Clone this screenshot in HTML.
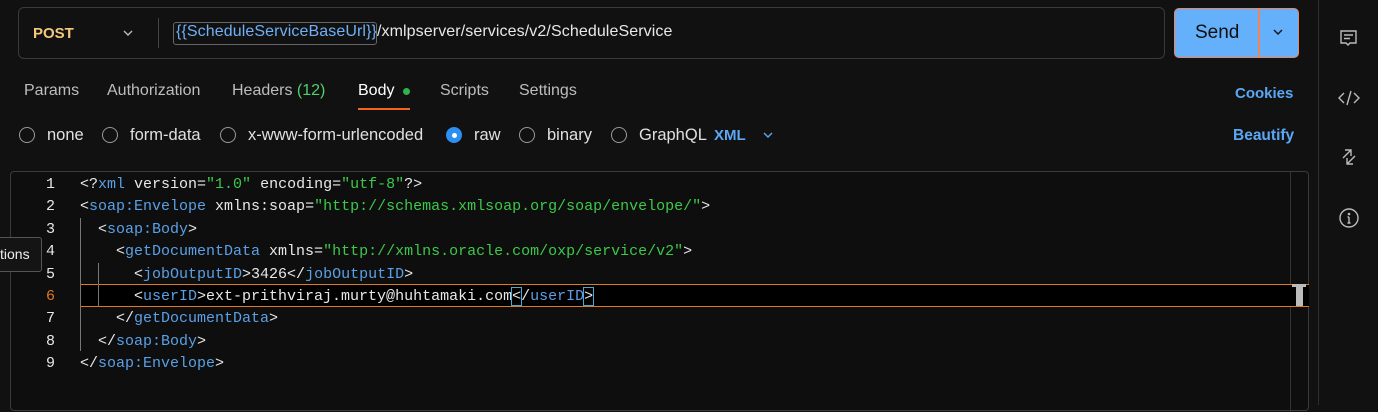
<!DOCTYPE html>
<html><head><style>
*{margin:0;padding:0;box-sizing:border-box}
body{width:1378px;height:405px;background:#111111;font-family:"Liberation Sans",sans-serif;color:#d0d0d0;position:relative;overflow:hidden}
.abs{position:absolute}
.url{left:18px;top:7px;width:1147px;height:52px;border:1px solid #3a3a3a;border-radius:6px}
.tab{top:82px;font-size:16px;color:#bdbdbd}
.radio{top:127px;width:16px;height:16px;border:1.5px solid #9a9a9a;border-radius:50%}
.rl{top:126px;font-size:16.5px;color:#e0e0e0}
.code{font-family:"Liberation Mono",monospace;font-size:15px;white-space:pre;line-height:22.4px}
.t{color:#5aa0e6}.s{color:#3cc94a}.w{color:#e8e8e8}
.ln{font-family:"Liberation Mono",monospace;font-size:15px;line-height:22.4px;text-align:right;width:20px;color:#e8e8e8}
</style></head><body>
<div class="abs url"></div>
<div class="abs" style="left:33px;top:25px;font-size:15px;font-weight:bold;color:#f5c97a">POST</div>
<svg class="abs" style="left:122px;top:28px" width="12" height="10"><path d="M2 3l4 4 4-4" stroke="#bbb" stroke-width="1.4" fill="none"/></svg>
<div class="abs" style="left:158px;top:18px;width:1px;height:30px;background:#444"></div>
<div class="abs" style="left:173px;top:22px;height:23px;width:204px;border:1px solid #666;border-radius:3px"></div>
<div class="abs" style="left:176px;top:23px;font-size:16px;color:#6fb0f7;letter-spacing:0.1px">{{ScheduleServiceBaseUrl}}<span style="color:#e8e8e8">/xmlpserver/services/v2/ScheduleService</span></div>
<div class="abs" style="left:1174px;top:8px;width:125px;height:50px;background:#64b0fb;border:1.5px solid #f0845a;border-radius:5px"></div>
<div class="abs" style="left:1258px;top:9px;width:2px;height:48px;background:#f0845a"></div>
<div class="abs" style="left:1195px;top:22px;font-size:19px;color:#101010">Send</div>
<svg class="abs" style="left:1272px;top:27px" width="12" height="10"><path d="M2 3l4 4 4-4" stroke="#111" stroke-width="1.4" fill="none"/></svg>
<div class="abs" style="left:1318px;top:0;width:1px;height:405px;background:#2e2e2e"></div>
<svg class="abs" style="left:1338px;top:28px" width="22" height="22" fill="none" stroke="#bbb" stroke-width="1.4"><path d="M3 3h15v12h-6l-2 2-2-2H3z M6 7h9 M6 10.5h6"/></svg>
<svg class="abs" style="left:1337px;top:88px" width="24" height="20" fill="none" stroke="#bbb" stroke-width="1.4"><path d="M7 5l-5 5 5 5 M17 5l5 5-5 5 M14 3l-4 14"/></svg>
<svg class="abs" style="left:1340px;top:147px" width="18" height="20" fill="none" stroke="#bbb" stroke-width="1.4"><path d="M5 3h6v6 M11 3l-8 8 M13 17H7v-6 M7 17l8-8"/></svg>
<svg class="abs" style="left:1338px;top:207px" width="22" height="22" fill="none" stroke="#bbb" stroke-width="1.4"><circle cx="11" cy="11" r="9"/><path d="M11 10v6 M9.5 10h1.5 M9.5 16h3"/><circle cx="11" cy="7" r="0.6" fill="#bbb"/></svg>
<div class="abs tab" style="left:24px">Params</div>
<div class="abs tab" style="left:107px">Authorization</div>
<div class="abs tab" style="left:232px">Headers <span style="color:#4fd06a">(12)</span></div>
<div class="abs tab" style="left:358px;color:#fff">Body</div>
<div class="abs" style="left:403px;top:88px;width:7px;height:7px;border-radius:50%;background:#2fb34e"></div>
<div class="abs" style="left:358px;top:108px;width:52px;height:2px;background:#f0641e"></div>
<div class="abs tab" style="left:440px">Scripts</div>
<div class="abs tab" style="left:519px">Settings</div>
<div class="abs" style="left:1235px;top:85px;font-size:15px;font-weight:bold;color:#5aa8f5">Cookies</div>
<div class="abs radio" style="left:19px"></div><div class="abs rl" style="left:47px">none</div>
<div class="abs radio" style="left:102px"></div><div class="abs rl" style="left:130px">form-data</div>
<div class="abs radio" style="left:220px"></div><div class="abs rl" style="left:248px">x-www-form-urlencoded</div>
<div class="abs radio" style="left:446px;background:#2d8ff0;border-color:#2d8ff0"></div><div class="abs" style="left:452px;top:133px;width:5px;height:5px;border-radius:50%;background:#fff"></div><div class="abs rl" style="left:474px">raw</div>
<div class="abs radio" style="left:519px"></div><div class="abs rl" style="left:547px">binary</div>
<div class="abs radio" style="left:611px"></div><div class="abs rl" style="left:639px">GraphQL</div>
<div class="abs" style="left:714px;top:127px;font-size:15px;font-weight:bold;color:#5aa8f5">XML</div>
<svg class="abs" style="left:762px;top:130px" width="12" height="10"><path d="M2 3l4 4 4-4" stroke="#5aa8f5" stroke-width="1.4" fill="none"/></svg>
<div class="abs" style="left:1233px;top:127px;font-size:15.5px;font-weight:bold;color:#5aa8f5">Beautify</div>
<div class="abs" style="left:10px;top:171px;width:1299px;height:240px;border:1px solid #3a3a3a;border-radius:4px;background:#0e0e0e"></div>
<div class="abs" style="left:1290px;top:172px;width:1px;height:240px;background:#333"></div>
<div class="abs" style="left:80px;top:284px;width:1229px;height:23px;background:#000;border-top:1px solid #e07a20;border-bottom:1px solid #e07a20"></div>
<div class="abs" style="left:1292px;top:284px;width:14px;height:3px;background:#bbb"></div>
<div class="abs" style="left:1296px;top:284px;width:7px;height:22px;background:#bbb"></div>
<div class="abs ln" style="left:35px;top:174px">1<br>2<br>3<br>4<br>5<br><span style="color:#e07a20">6</span><br>7<br>8<br>9</div>
<div class="abs" style="left:80px;top:218px;width:1px;height:133px;background:#777"></div>
<div class="abs" style="left:98px;top:263px;width:1px;height:44px;background:#777"></div>
<div class="abs code w" style="left:80px;top:174px">&lt;?<span class="t">xml</span> version=<span class="s">"1.0"</span> encoding=<span class="s">"utf-8"</span>?&gt;
&lt;<span class="t">soap:Envelope</span> xmlns:soap=<span class="s">"http://schemas.xmlsoap.org/soap/envelope/"</span>&gt;
  &lt;<span class="t">soap:Body</span>&gt;
    &lt;<span class="t">getDocumentData</span> xmlns=<span class="s">"http://xmlns.oracle.com/oxp/service/v2"</span>&gt;
      &lt;<span class="t">jobOutputID</span>&gt;3426&lt;/<span class="t">jobOutputID</span>&gt;
      &lt;<span class="t">userID</span>&gt;ext-prithviraj.murty@huhtamaki.com<span style="outline:1px solid #4aa8d8">&lt;</span>/<span class="t">userID</span><span style="outline:1px solid #4aa8d8">&gt;</span>
    &lt;/<span class="t">getDocumentData</span>&gt;
  &lt;/<span class="t">soap:Body</span>&gt;
&lt;/<span class="t">soap:Envelope</span>&gt;</div>
<div class="abs" style="left:-4px;top:237px;width:46px;height:35px;border:1px solid #555;border-radius:3px;background:#141414"></div>
<div class="abs" style="left:0;top:246px;font-size:14px;color:#eee">tions</div>
</body></html>
